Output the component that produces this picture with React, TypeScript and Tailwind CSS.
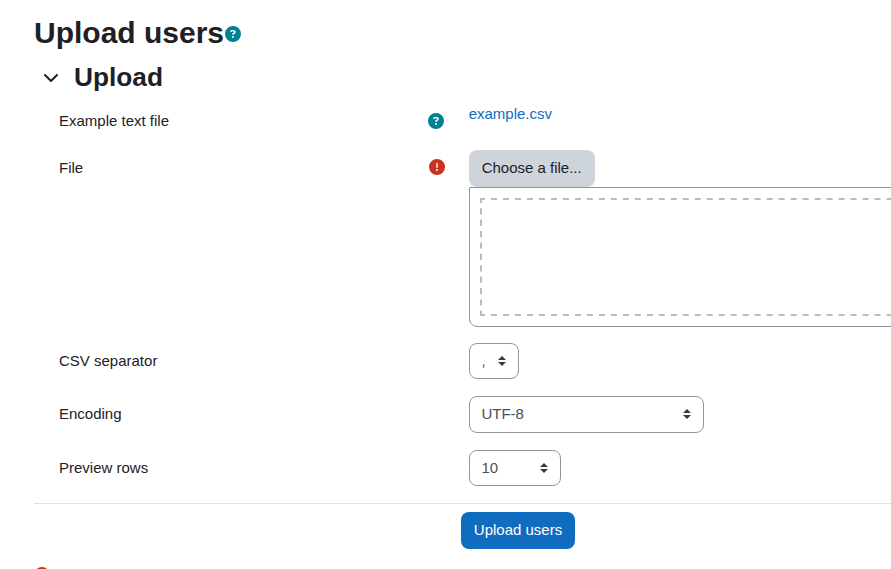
import type { ReactNode } from "react";
import { FaChevronDown, FaCircleExclamation, FaCircleQuestion } from "react-icons/fa6";

function Row({ label, icon, height, children }: { label: string; icon?: ReactNode; height: string; children: ReactNode }) {
  return (
    <div className={`flex items-start ${height}`}>
      <div className="ml-[25px] flex w-[409.66px] shrink-0 justify-between pt-[7px]">
        <label>{label}</label>
        {icon}
      </div>
      {children}
    </div>
  );
}

function Select({ value, size }: { value: string; size: string }) {
  return (
    <button
      className={`flex items-center justify-between rounded-lg border border-[#8f959e] pl-[11.8px] pr-[11.6px] text-left text-[#495057] ${size}`}
    >
      <span>{value}</span>
      <svg viewBox="0 0 4 5" className="mb-[0.6px] h-[10px] w-2" aria-hidden="true">
        <path fill="#343a40" d="M2 0L0 2h4zm0 5L0 3h4z" />
      </svg>
    </button>
  );
}

function DropOutline() {
  return (
    <svg className="block h-[118px] w-[440px]" viewBox="0 0 440 118" fill="none" stroke="#bbb" strokeWidth="2" aria-hidden="true">
      <path d="M-1 1H440M-1 117H440" strokeDasharray="6 5.985" />
      <path d="M1 -1.2V118" strokeDasharray="6.2 5.2" />
    </svg>
  );
}

export default function App() {
  return (
    <main className="h-[569px] w-full overflow-hidden bg-white pl-[34px] pt-[15px] font-['Liberation_Sans',Arial,sans-serif] text-[15px] leading-[22.5px] text-[#1d2125]">
      <h1 className="flex h-9 items-center text-[30px] font-bold leading-9">
        Upload users
        <FaCircleQuestion className="ml-px mt-[2px] size-4 text-[#008196]" />
      </h1>
      <h3 className="mt-[11px] flex h-8 items-center text-[26.25px] font-bold leading-[31.5px]">
        <FaChevronDown className="mb-[2px] ml-[9px] mr-[15px] size-4" />
        Upload
      </h3>
      <div className="pt-2">
        <Row
          label="Example text file"
          height="h-[48px] pt-[1px]"
          icon={<FaCircleQuestion className="mr-[24.2px] mt-[3px] size-4 text-[#008196]" />}
        >
          <a className="text-[#0f6cbf]">example.csv</a>
        </Row>
        <Row
          label="File"
          height="h-[193px]"
          icon={<FaCircleExclamation className="mr-[23.2px] mt-[2px] size-4 text-[#ca3120]" />}
        >
          <div className="flex shrink-0 flex-col items-start">
            <button className="h-[37px] w-[126px] rounded-lg bg-[#ced4da]">Choose a file...</button>
            <div className="h-[140px] w-[800px] rounded-b-lg border border-[#8f959e] p-[10px]">
              <DropOutline />
            </div>
          </div>
        </Row>
        <Row label="CSV separator" height="h-[53px]">
          <Select value="," size="h-9 w-[50px]" />
        </Row>
        <Row label="Encoding" height="h-[54px]">
          <Select value="UTF-8" size="h-[37px] w-[235px]" />
        </Row>
        <Row label="Preview rows" height="h-[53px]">
          <Select value="10" size="h-9 w-[92px]" />
        </Row>
      </div>
      <div className="border-t border-[#dee2e6] pt-2">
        <button className="ml-[427px] block h-[37px] w-[114px] rounded-lg bg-[#0f6cbf] text-white">Upload users</button>
      </div>
      <FaCircleExclamation className="mt-[18px] size-4 text-[#ca3120]" />
    </main>
  );
}
